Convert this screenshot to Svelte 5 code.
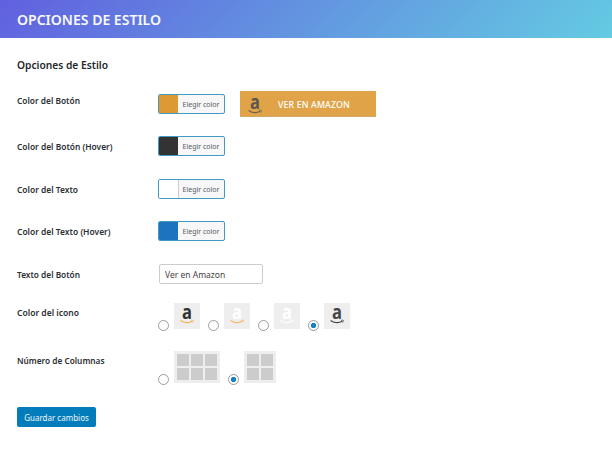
<script>
  let buttonText = $state('Ver en Amazon');
  let icon = $state(3);
  let columns = $state(1);

  const colors = [
    { label: 'Color del Botón', width: 63, value: '#dd9933', preview: true },
    { label: 'Color del Botón (Hover)', width: 95.5, value: '#333333' },
    { label: 'Color del Texto', width: 61, value: '#ffffff', light: true },
    { label: 'Color del Texto (Hover)', width: 93.5, value: '#1e73be' }
  ];
  const icons = [
    { letter: '#333333', smile: '#f3b24f' },
    { letter: '#ffffff', smile: '#f3b965' },
    { letter: '#ffffff', smile: '#ffffff' },
    { letter: '#464646', smile: '#464646' }
  ];
  const layouts = [3, 2];
</script>

{#snippet amazon(letter, smile)}
  <svg class="amazon" width="16" height="16" viewBox="0 0 16 16">
    <text x="7.9" y="11.4" text-anchor="middle" textLength="10" lengthAdjust="spacingAndGlyphs" fill={letter}>a</text>
    <path d="M1.6 12.4 Q7.5 16.5 13.2 13.3" fill="none" stroke={smile} stroke-width="1.2" />
    <path d="M12 12.4 Q13.8 11.9 14.4 12.4 Q14.4 13.6 13.5 14.6" fill="none" stroke={smile} stroke-width="0.8" />
  </svg>
{/snippet}

{#snippet label(text, width)}
  <svg class="label" width="130" height="18">
    <text x="0" y="12.5" textLength={width} lengthAdjust="spacingAndGlyphs">{text}</text>
  </svg>
{/snippet}

<div class="page">
  <header>
    <svg width="160" height="26"><text x="0" y="18.5" textLength="144" lengthAdjust="spacingAndGlyphs">OPCIONES DE ESTILO</text></svg>
  </header>
  <main>
    <h2><svg width="120" height="20"><text x="0" y="14" textLength="91" lengthAdjust="spacingAndGlyphs">Opciones de Estilo</text></svg></h2>

    {#each colors as color}
      <div class="row" class:first={color.preview}>
        {@render label(color.label, color.width)}
        <button class="picker">
          <span class="swatch" class:light={color.light} style:background={color.value}></span>
          <span class="pick">Elegir color</span>
        </button>
        {#if color.preview}
          <a class="preview" href="#preview">
            {@render amazon('#5b5650', '#69604f')}
            <span>VER EN AMAZON</span>
          </a>
        {/if}
      </div>
    {/each}

    <div class="row text-row">
      {@render label('Texto del Botón', 63)}
      <input type="text" bind:value={buttonText} />
    </div>

    <div class="row icon-row">
      {@render label('Color del icono', 62)}
      {#each icons as item, i}
        <label class="choice">
          <input type="radio" name="icon" value={i} bind:group={icon} />
          <span class="tile">{@render amazon(item.letter, item.smile)}</span>
        </label>
      {/each}
    </div>

    <div class="row columns-row">
      {@render label('Número de Columnas', 87.5)}
      {#each layouts as count, i}
        <label class="choice">
          <input type="radio" name="columns" value={i} bind:group={columns} />
          <span class="cells" style:grid-template-columns={`repeat(${count}, 12px)`}>
            {#each Array.from({ length: count * 2 }) as _}
              <span class="cell"></span>
            {/each}
          </span>
        </label>
      {/each}
    </div>

    <button class="save">Guardar cambios</button>
  </main>
</div>

<style>
  :global(body) { margin: 0; background: #fff; }
  .page {
    width: 612px;
    height: 450px;
    overflow: hidden;
    background: #fff;
    font-family: "Noto Sans", "Open Sans", sans-serif;
    color: #23282d;
  }
  svg { display: block; flex: none; overflow: visible; }
  header {
    height: 38px;
    box-sizing: border-box;
    padding: 6px 17px;
    background: linear-gradient(135deg, #6160df 0%, #64cbe2 100%);
  }
  header text { font-size: 14px; font-weight: 600; fill: #f8f8ff; }
  main { display: flex; flex-direction: column; align-items: flex-start; padding: 17px 17px 0; }
  h2 { margin: 0 0 16px; height: 20px; }
  h2 text { font-size: 11.5px; font-weight: 600; fill: #23282d; }
  .row { display: flex; align-items: center; height: 20px; margin-bottom: 22.4px; }
  .row.first { height: 26px; margin-bottom: 19.2px; }
  .first > .label { align-self: flex-start; }
  .label { margin-right: 11px; }
  .label text { font-size: 9px; font-weight: 600; fill: #2b3035; }
  .picker {
    display: flex;
    width: 67px;
    height: 20px;
    box-sizing: border-box;
    padding: 0;
    border: 1px solid #409bc0;
    border-radius: 2px;
    background: #f7f7f7;
    overflow: hidden;
    font-family: inherit;
  }
  .swatch { width: 19px; height: 18px; flex: none; }
  .swatch.light { width: 20px; box-sizing: border-box; border-right: 1px solid #ccc; margin-right: -1px; }
  .pick {
    flex: 1;
    font-size: 7px;
    line-height: 20px;
    color: #555d66;
    text-align: center;
    white-space: nowrap;
  }
  .preview {
    display: flex;
    align-items: center;
    width: 136px;
    height: 26px;
    box-sizing: border-box;
    margin-left: 15px;
    padding-left: 7px;
    border-bottom: 1px solid #d3a66a;
    background: #e0a347;
    color: #fff;
    font-size: 8.8px;
    font-weight: 500;
    letter-spacing: 0.12px;
    text-decoration: none;
    white-space: nowrap;
  }
  .preview span { margin: 2px 0 0 15px; }
  .preview :global(.amazon) { margin-top: 4px; }
  .amazon text { font-family: "Open Sans", "Noto Sans", sans-serif; font-size: 19.5px; font-weight: 700; }
  .text-row { margin: 0.8px 0 19px; }
  .text-row input {
    width: 104px;
    height: 20px;
    box-sizing: border-box;
    margin: 0 0 0 1px;
    padding: 1px 5px 0;
    border: 1px solid #ccc;
    border-radius: 2px;
    outline: none;
    background: #fff;
    color: #444;
    font-family: inherit;
    font-size: 8.5px;
  }
  .icon-row { height: 26px; margin-bottom: 22px; }
  .icon-row .label, .columns-row .label { align-self: flex-start; }
  .choice { display: flex; align-items: flex-end; }
  .icon-row .choice { width: 50px; }
  .choice input {
    appearance: none;
    width: 11px;
    height: 11px;
    box-sizing: border-box;
    flex: none;
    margin: 0 5px -2px 0;
    border: 1px solid #989ca2;
    border-radius: 50%;
    background: #fff;
  }
  .choice input:checked { background: radial-gradient(circle, #1584be 0 2.3px, #fff 3px); }
  .tile { display: flex; align-items: center; justify-content: center; width: 26px; height: 26px; background: #eee; }
  .columns-row { height: 32px; margin-bottom: 24px; }
  .columns-row .choice { margin-right: 8px; }
  .cells { display: grid; grid-auto-rows: 12px; gap: 2px; padding: 3px; background: #eee; }
  .cell { background: #ccc; }
  .save {
    width: 79px;
    height: 20px;
    padding: 0;
    border: 0;
    border-radius: 2px;
    background: #027cba;
    color: #f0f8fc;
    font-family: inherit;
    font-size: 8px;
    line-height: 21px;
  }
</style>
